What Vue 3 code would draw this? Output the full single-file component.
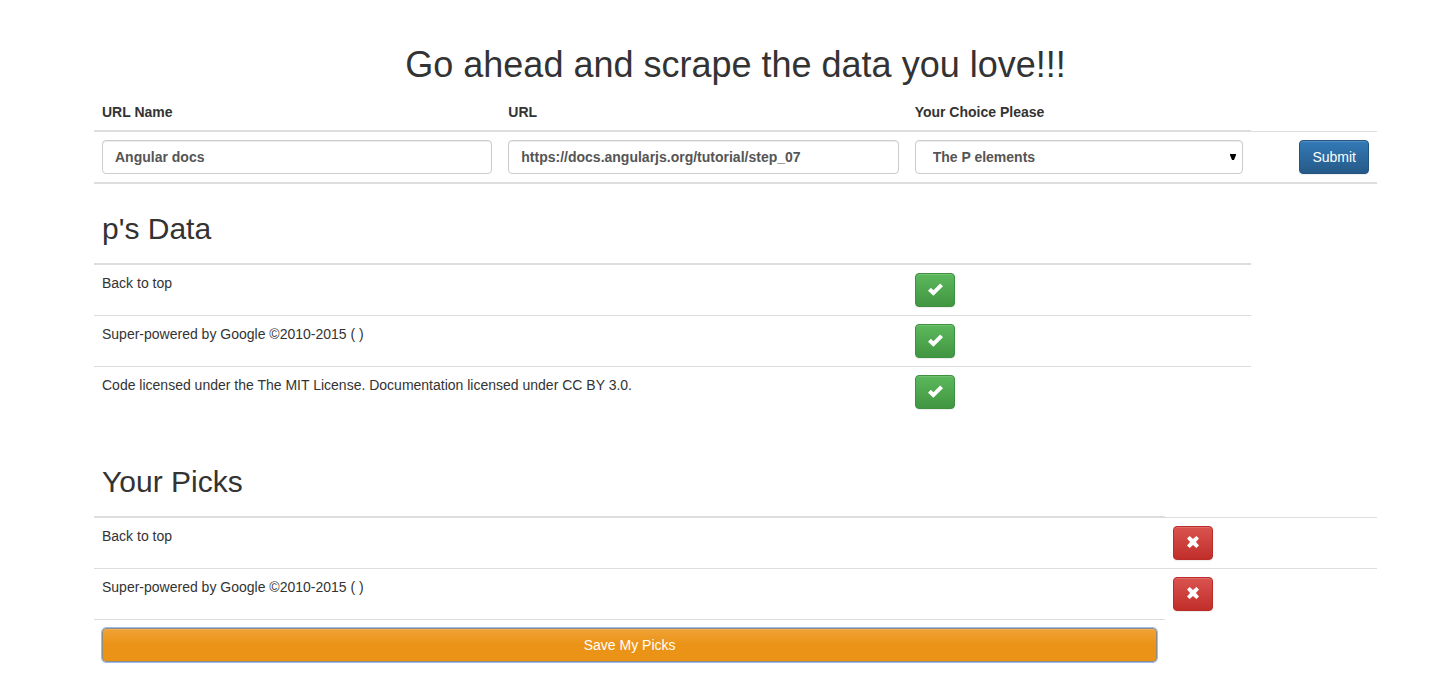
<script setup>
import { ref } from 'vue'

const urlName = ref('Angular docs')
const url = ref('https://docs.angularjs.org/tutorial/step_07')
const choice = ref('p')
const results = [
  'Back to top',
  'Super-powered by Google ©2010-2015 ( )',
  'Code licensed under the The MIT License. Documentation licensed under CC BY 3.0.',
]
const picks = ref(results.slice(0, 2))

function addPick(text) {
  if (!picks.value.includes(text)) picks.value.push(text)
}
function removePick(index) {
  picks.value.splice(index, 1)
}
</script>

<template>
  <main class="page">
    <h1>Go ahead and scrape the data you love!!!</h1>

    <form id="scrape" @submit.prevent></form>
    <table class="table">
      <colgroup>
        <col class="col-name" />
        <col class="col-url" />
        <col class="col-choice" />
        <col />
      </colgroup>
      <thead>
        <tr>
          <th><label for="url-name">URL Name</label></th>
          <th><label for="url">URL</label></th>
          <th><label for="choice">Your Choice Please</label></th>
        </tr>
      </thead>
      <tbody>
        <tr>
          <td><input id="url-name" v-model="urlName" class="control" type="text" form="scrape" /></td>
          <td><input id="url" v-model="url" class="control" type="text" form="scrape" /></td>
          <td>
            <div class="select">
              <select id="choice" v-model="choice" class="control" form="scrape">
                <option value="p">The P elements</option>
              </select>
              <svg class="arrow" viewBox="0 0 6 6" aria-hidden="true"><path d="M0 0h6v1L4 6H2L0 1z" /></svg>
            </div>
          </td>
          <td class="end"><button class="btn primary" type="submit" form="scrape">Submit</button></td>
        </tr>
      </tbody>
      <tbody class="group">
        <tr>
          <th colspan="3" class="title"><h2>p's Data</h2></th>
        </tr>
        <tr v-for="text in results" :key="text">
          <td colspan="2">{{ text }}</td>
          <td>
            <button class="btn success" type="button" aria-label="Pick" @click="addPick(text)">
              <svg class="icon" viewBox="0 0 16 14" aria-hidden="true">
                <path d="M1 8.7 3.9 5.8 6.4 8.2 13.2 1.4 16 4.2 6.4 13.8z" />
              </svg>
            </button>
          </td>
        </tr>
      </tbody>
    </table>

    <table class="table picks">
      <colgroup>
        <col class="col-pick" />
        <col />
      </colgroup>
      <thead>
        <tr>
          <th class="title"><h2>Your Picks</h2></th>
        </tr>
      </thead>
      <tbody>
        <tr v-for="(text, i) in picks" :key="text">
          <td>{{ text }}</td>
          <td>
            <button class="btn danger" type="button" aria-label="Remove" @click="removePick(i)">
              <svg class="icon" viewBox="0 0 16 14" aria-hidden="true">
                <path d="M2 3.6 4.7 0.9 8 4.1 11.3 0.9 14 3.6 10.9 7 14 10.4 11.3 13.1 8 9.9 4.7 13.1 2 10.4 5.1 7z" />
              </svg>
            </button>
          </td>
        </tr>
        <tr>
          <td><button class="btn warning" type="button">Save My Picks</button></td>
        </tr>
      </tbody>
    </table>
  </main>
</template>

<style>
body {
  background: #fff;
}
</style>

<style scoped>
.page {
  padding: 44px 69px 0 94px;
  font: 14px/20px "Liberation Sans", Arial, sans-serif;
  color: #333;
}
h1,
h2 {
  font-weight: 400;
}
h1 {
  margin: 0 0 8px;
  font-size: 36px;
  line-height: 42px;
  text-align: center;
}
h2 {
  margin: 20px 0 10px;
  font-size: 30px;
  line-height: 33px;
}
.table {
  width: 100%;
  margin-bottom: 20px;
  border-collapse: collapse;
  table-layout: fixed;
}
.picks tbody tr {
  height: 51px;
}
.col-name {
  width: 31.67%;
}
.col-url {
  width: 31.67%;
}
.col-choice {
  width: 26.85%;
}
.col-pick {
  width: 83.5%;
}
th,
td {
  padding: 8px;
  text-align: left;
  vertical-align: top;
}
td {
  border-top: 1px solid #ddd;
}
thead th,
.title {
  border-bottom: 2px solid #ddd;
}
.group {
  border-top: 2px solid #ddd;
}
.end {
  text-align: right;
}
.control {
  display: block;
  box-sizing: border-box;
  width: 100%;
  height: 34px;
  margin: 0;
  padding: 6px 12px;
  border: 1px solid #ccc;
  border-radius: 4px;
  background: #fff;
  box-shadow: inset 0 1px 1px rgba(0, 0, 0, 0.075);
  color: #555;
  font: bold 14px/20px "Liberation Sans", Arial, sans-serif;
}
.select {
  position: relative;
}
select.control {
  appearance: none;
  padding-left: 17px;
}
.arrow {
  position: absolute;
  top: 14px;
  right: 7px;
  width: 6px;
  height: 6px;
  pointer-events: none;
}
.btn {
  display: inline-block;
  box-sizing: border-box;
  height: 34px;
  margin: 0;
  padding: 6px 12px;
  border: 1px solid;
  border-radius: 4px;
  box-shadow: inset 0 1px 0 rgba(255, 255, 255, 0.15), 0 1px 1px rgba(0, 0, 0, 0.075);
  color: #fff;
  font: 14px/20px "Liberation Sans", Arial, sans-serif;
  vertical-align: top;
  cursor: pointer;
}
.primary {
  border-color: #245580;
  background: linear-gradient(#337ab7, #265a88);
}
.success {
  width: 40px;
  border-color: #3e8f3e;
  background: linear-gradient(#5cb85c, #419641);
}
.danger {
  width: 40px;
  border-color: #b92c28;
  background: linear-gradient(#d9534f, #c12e2a);
}
.warning {
  width: 100%;
  border-color: #8c8c85;
  background: linear-gradient(#f0a235, #eb9316 50%);
  outline: 1px solid #9dbcf0;
}
.icon {
  display: block;
  width: 16px;
  height: 14px;
  margin: 2px -1px 4px;
  fill: #fff;
}
</style>
